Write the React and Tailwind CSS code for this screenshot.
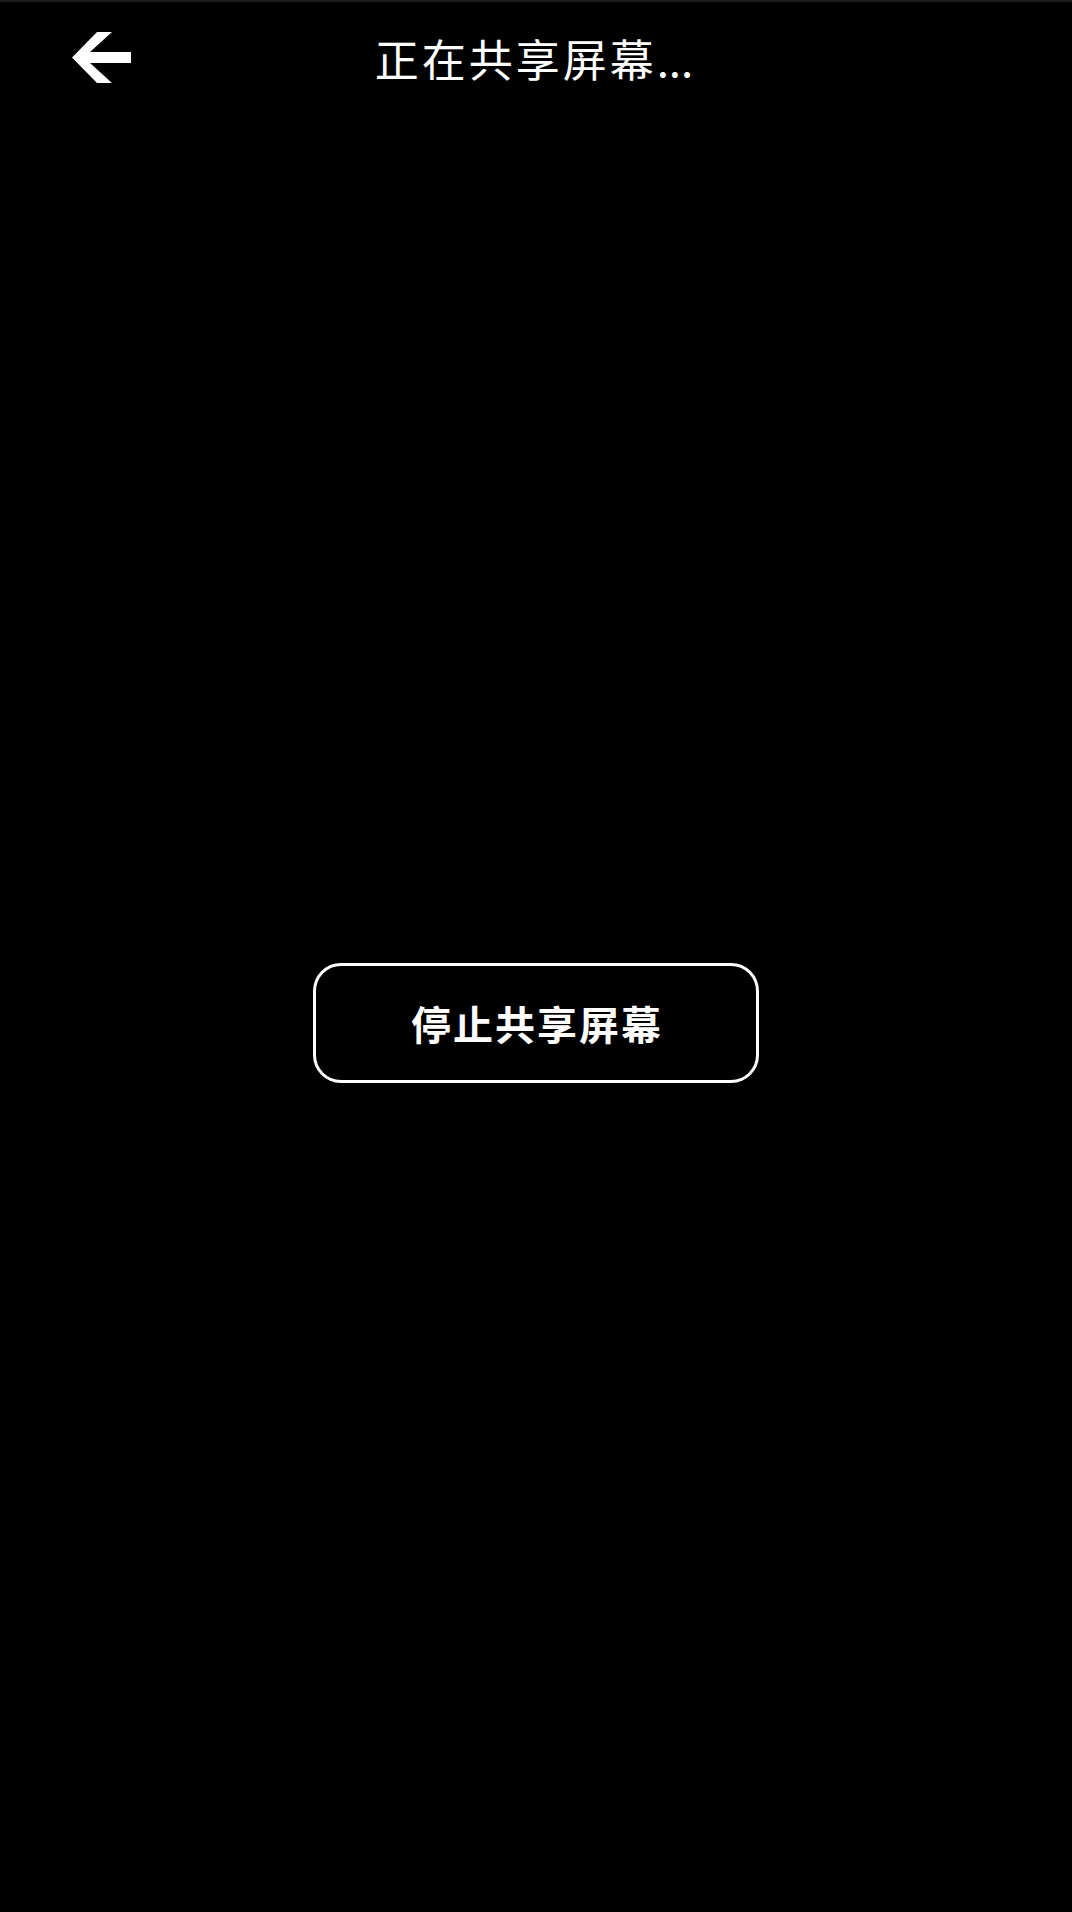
export default function App() {
  return (
    <div
      className="w-[1072px] h-[1912px] bg-black border-t-2 border-[#1c1c1c] flex flex-col text-white"
      style={{ fontFamily: '"Noto Sans CJK SC", "Noto Sans", sans-serif' }}
    >
      {/* Top bar */}
      <div className="relative h-[116px] flex items-center justify-center">
        <button className="absolute left-[72px] top-[30px] w-[59px] h-[51px]">
          <svg width="59" height="51" viewBox="0 0 59 51">
            <polygon
              points="0,25.5 25,0 40,0 18,20 59,20 59,31 18,31 40,51 25,51"
              fill="#fff"
            />
          </svg>
        </button>
        <h1 className="text-[44px] leading-none tracking-[3px] -mt-[4px] pr-[4px]">
          正在共享屏幕<span className="tracking-[0px]">...</span>
        </h1>
      </div>

      {/* Content */}
      <div className="flex justify-center pt-[845px]">
        <button className="w-[446px] h-[120px] rounded-[28px] border-[3px] border-white flex items-center justify-center">
          <span className="text-[40px] font-semibold tracking-[2px] pl-[2px] leading-none">
            停止共享屏幕
          </span>
        </button>
      </div>
    </div>
  );
}
